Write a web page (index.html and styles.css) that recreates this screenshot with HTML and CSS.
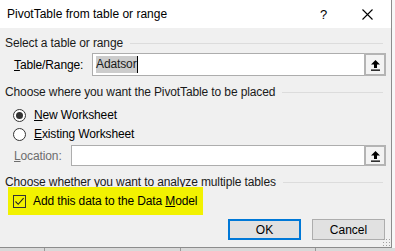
FILE: index.html
```html
<!DOCTYPE html>
<html>
<head>
    <title>PivotTable from table or range</title>
    <link rel="stylesheet" href="styles.css">
</head>
<body>
    <div class="screen">
        <div class="dialog">
            <div class="title-bar">
                <span class="title">PivotTable from table or range</span>
                <span class="help">?</span>
                <span class="close">
                    <svg width="11" height="11" viewBox="0 0 11 11"><path d="M0.5 0.5 L10.5 10.5 M10.5 0.5 L0.5 10.5" stroke="#000" stroke-width="1.1" fill="none"/></svg>
                </span>
            </div>
            <div class="content">
                <div class="group-header first">
                    <span>Select a table or range</span>
                    <div class="rule"></div>
                </div>
                <div class="field-row range-row">
                    <label class="field-label"><u>T</u>able/Range:</label>
                    <div class="ref-input">
                        <div class="ref-text"><span class="selected">Adatsor</span><span class="caret"></span></div>
                        <div class="ref-button">
                            <svg width="11" height="12" viewBox="0 0 11 12"><path d="M5.5 1 L10 5.5 L7 5.5 L7 9 L4 9 L4 5.5 L1 5.5 Z" fill="#000"/><rect x="1" y="10.5" width="9" height="1.3" fill="#000"/></svg>
                        </div>
                    </div>
                </div>
                <div class="group-header second">
                    <span>Choose where you want the PivotTable to be placed</span>
                    <div class="rule"></div>
                </div>
                <div class="option-row first-option">
                    <span class="radio checked"></span>
                    <span><u>N</u>ew Worksheet</span>
                </div>
                <div class="option-row">
                    <span class="radio"></span>
                    <span><u>E</u>xisting Worksheet</span>
                </div>
                <div class="field-row location-row">
                    <label class="field-label disabled"><u>L</u>ocation:</label>
                    <div class="ref-input short">
                        <div class="ref-text"></div>
                        <div class="ref-button">
                            <svg width="11" height="12" viewBox="0 0 11 12"><path d="M5.5 1 L10 5.5 L7 5.5 L7 9 L4 9 L4 5.5 L1 5.5 Z" fill="#000"/><rect x="1" y="10.5" width="9" height="1.3" fill="#000"/></svg>
                        </div>
                    </div>
                </div>
                <div class="group-header third">
                    <span>Choose whether you want to analyze multiple tables</span>
                    <div class="rule"></div>
                </div>
                <div class="highlight">
                    <span class="checkbox">
                        <svg width="11" height="11" viewBox="0 0 11 11"><path d="M1.5 5.5 L4.2 8.3 L9.6 2.2" stroke="#222" stroke-width="1.1" fill="none"/></svg>
                    </span>
                    <span>Add this data to the Data <u>M</u>odel</span>
                </div>
                <div class="buttons">
                    <button class="btn default">OK</button>
                    <button class="btn">Cancel</button>
                </div>
            </div>
            <div class="grip"></div>
        </div>
        <div class="sheet-right"></div>
    </div>
    <div class="sheet-bottom">
        <div class="col c1"></div>
        <div class="col c2"></div>
        <div class="col c3"></div>
        <div class="col c4"></div>
    </div>
</body>
</html>
```

FILE: styles.css
```css
* {
    margin: 0;
    padding: 0;
    box-sizing: border-box;
}

body {
    width: 395px;
    height: 251px;
    overflow: hidden;
    background: #fafafa;
    font-family: 'Liberation Sans', Arial, sans-serif;
    font-size: 12px;
    letter-spacing: -0.12px;
    color: #000;
}

.screen {
    display: flex;
    height: 248px;
}

.dialog {
    position: relative;
    width: 392px;
    height: 248px;
    background: #f0f0f0;
    border-right: 1px solid #8c8c8c;
    border-bottom: 1px solid #8c8c8c;
    display: flex;
    flex-direction: column;
}

.sheet-right {
    flex: 1;
    background: #f7f7f7;
}

.sheet-bottom {
    display: flex;
    height: 3px;
    background: #d9d9d9;
}

.sheet-bottom .col {
    border-right: 1px solid #9a9a9a;
}

.c1 { width: 45px; }
.c2 { width: 136px; }
.c3 { width: 135px; }
.c4 { flex: 1; border-right: none !important; }

.title-bar {
    height: 28px;
    background: #fff;
    display: flex;
    align-items: center;
    padding-left: 7px;
}

.title {
    flex: 1;
    font-size: 12px;
    letter-spacing: 0;
}

.help {
    width: 10px;
    margin-right: 32px;
    font-size: 13px;
}

.close {
    width: 11px;
    height: 11px;
    margin-right: 18px;
    display: flex;
}

.content {
    padding: 0 5px;
    display: flex;
    flex-direction: column;
}

.group-header {
    display: flex;
    align-items: center;
    height: 16px;
    white-space: nowrap;
    color: #1a1a1a;
}

.group-header .rule {
    flex: 1;
    height: 1px;
    background: #dcdcdc;
    margin: 0 3px 0 7px;
}

.group-header.first { margin-top: 7px; }
.group-header.second { margin-top: 8px; }
.group-header.third { margin-top: 8px; }

.field-row {
    display: flex;
    align-items: center;
    padding-left: 9px;
}

.range-row { margin-top: 2px; }
.location-row { margin-top: 3px; }

.field-label {
    width: 78px;
}

.location-row .field-label {
    width: 57px;
}

.field-label.disabled {
    color: #6d6d6d;
}

.ref-input {
    flex: 1;
    height: 23px;
    display: flex;
    background: #fff;
    border: 1px solid #adadad;
}

.ref-input.short {
    height: 21px;
}

.ref-text {
    flex: 1;
    display: flex;
    align-items: center;
    padding-left: 3px;
}

.selected {
    background: #cccccc;
    color: #1a1a1a;
    line-height: 17px;
}

.caret {
    width: 1px;
    height: 17px;
    background: #000;
}

.ref-button {
    width: 22px;
    background: #f3f3f3;
    border: 2px solid #b4b4b4;
    display: flex;
    align-items: center;
    justify-content: center;
    margin: -1px -1px -1px 0;
}

.option-row {
    display: flex;
    align-items: center;
    height: 16px;
    margin-top: 3px;
    padding-left: 8px;
}

.option-row.first-option {
    margin-top: 7px;
}

.radio {
    width: 13px;
    height: 13px;
    border: 1px solid #333;
    border-radius: 50%;
    background: #fff;
    margin-right: 8px;
    display: flex;
    align-items: center;
    justify-content: center;
}

.radio.checked::after {
    content: '';
    width: 7px;
    height: 7px;
    border-radius: 50%;
    background: #333;
}

.highlight {
    display: flex;
    align-items: center;
    width: 195px;
    height: 28px;
    margin: -3px 0 0 3px;
    padding-left: 5px;
    background: #f2f200;
    white-space: nowrap;
}

.checkbox {
    width: 13px;
    height: 13px;
    border: 1px solid #333;
    margin-right: 7px;
    display: flex;
    align-items: center;
    justify-content: center;
}

.buttons {
    display: flex;
    justify-content: flex-end;
    gap: 11px;
    margin-top: 4px;
    padding-right: 1px;
}

.btn {
    width: 73px;
    height: 21px;
    font-family: inherit;
    font-size: 12px;
    background: #e1e1e1;
    border: 1px solid #adadad;
    color: #000;
}

.btn.default {
    border: 2px solid #0078d7;
}

.grip {
    position: absolute;
    right: 1px;
    bottom: 1px;
    width: 8px;
    height: 8px;
    background-image: radial-gradient(#a0a0a0 40%, transparent 45%);
    background-size: 3px 3px;
}
```
